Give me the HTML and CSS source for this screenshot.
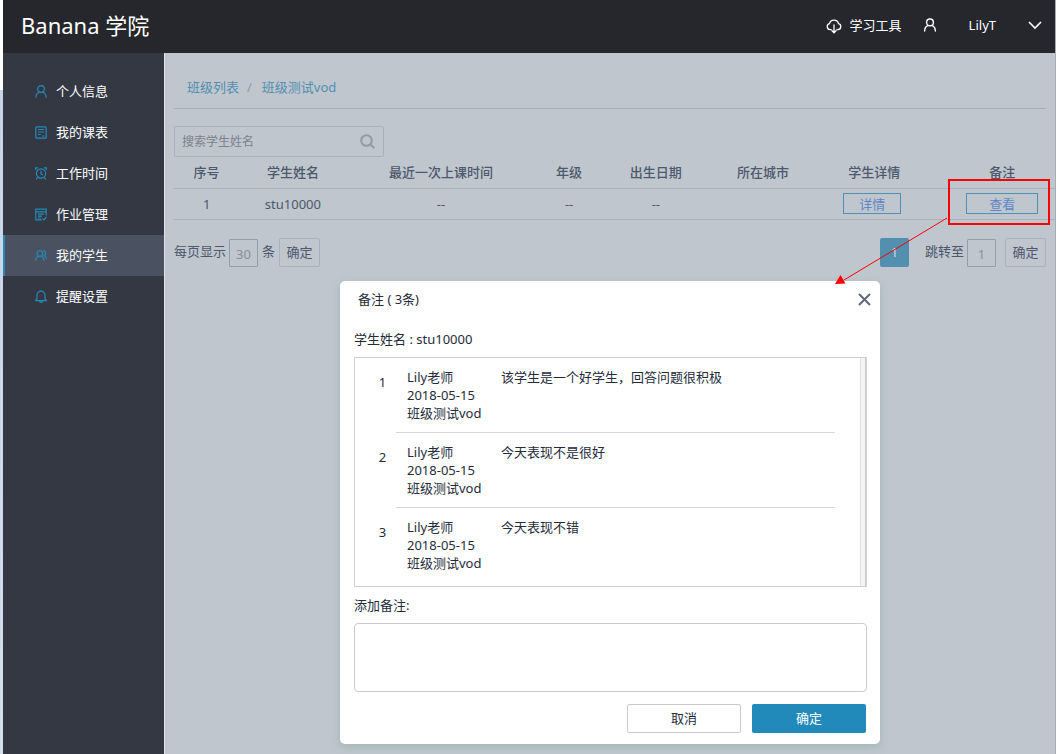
FILE: index.html
```html
<!DOCTYPE html>
<html lang="zh-CN">
<head>
<meta charset="utf-8">
<meta name="viewport" content="width=device-width, initial-scale=1">
<title>Banana 学院</title>
<link rel="stylesheet" href="styles.css">
</head>
<body>
<div class="app">
  <header class="topbar">
    <h1 class="brand">Banana 学院</h1>
    <nav class="topnav">
      <a class="tools" href="#">
        <svg width="16" height="16" viewBox="0 0 16 16" fill="none" stroke="currentColor" stroke-width="1.3" stroke-linecap="round" stroke-linejoin="round"><path d="M5.2 11.6H4a3 3 0 0 1-.5-5.9 4.6 4.6 0 0 1 9 0A3 3 0 0 1 12 11.6h-1.2M8 7v7.6M6 12.8l2 2 2-2"/></svg>
        <span>学习工具</span>
      </a>
      <svg class="user-icon" width="14" height="14" viewBox="0 0 14 14" fill="none" stroke="currentColor" stroke-width="1.4" stroke-linecap="round"><circle cx="7" cy="4.4" r="3.4"/><path d="M1.600 13c.1-3 1.500-4.900 3.600-5.600M12.400 13c-.1-3-1.500-4.900-3.600-5.600"/></svg>
      <button class="account" type="button">
        <span>LilyT</span>
        <svg width="14" height="9" viewBox="0 0 14 9" fill="none" stroke="currentColor" stroke-width="1.6"><path d="M1 1l6 6 6-6"/></svg>
      </button>
    </nav>
  </header>
  <div class="body">
    <nav class="sidebar">
      <a class="item" href="#"><svg class="icon" viewBox="0 0 12 13"><circle cx="6" cy="4" r="3.300"/><path d="M.8 12.700c0-2.700 1.300-4.700 3.500-5.500M11.200 12.700c0-2.700-1.300-4.700-3.500-5.500"/></svg>个人信息</a>
      <a class="item" href="#"><svg class="icon" viewBox="0 0 12 13"><rect x=".8" y=".8" width="10.400" height="11.400" rx="1"/><path d="M3 3.500h6M3 6h6M3 8.500h3M7 10h2.500"/></svg>我的课表</a>
      <a class="item" href="#"><svg class="icon" viewBox="0 0 12 13"><circle cx="6" cy="6.500" r="4.600"/><path d="M6 3.800v2.900l1.800 1.200M.7 3V.9h2.400M8.900.9h2.400V3M2.500 10.600L1.200 12.300M9.500 10.600l1.300 1.700"/></svg>工作时间</a>
      <a class="item" href="#"><svg class="icon" viewBox="0 0 12 13"><path d="M11.200 7.500V1.200H.8v10.600h6M.8 3.800h10.400M3 6.200h6M3 8.200h4M3 10h3M7.500 10.300l1.500 1.500 2.500-3"/></svg>作业管理</a>
      <a class="item active" href="#" aria-current="page"><svg class="icon" viewBox="0 0 12 13"><circle cx="4.800" cy="4.500" r="2.900"/><path d="M.6 11.800c0-2.300 1-3.800 2.600-4.500M9 11.800c0-2.300-1-3.800-2.600-4.500M8.300 1.700a2.700 2.700 0 0 1 .9 5.100c1.400.5 2.200 1.700 2.300 3.500"/></svg>我的学生</a>
      <a class="item" href="#"><svg class="icon" viewBox="0 0 12 13"><path d="M.6 10.600h10.800L10 8.700V5.200a4 4 0 0 0-8 0v3.500zM6 .2v1M4.600 11a1.400 1.400 0 0 0 2.800 0"/></svg>提醒设置</a>
    </nav>
    <main class="main">
      <nav class="crumbs"><a href="#">班级列表</a><span class="sep">/</span><a href="#">班级测试vod</a></nav>
      <form class="search">
        <input type="search" placeholder="搜索学生姓名" aria-label="搜索学生姓名">
        <button type="button" aria-label="搜索"><svg width="15" height="15" viewBox="0 0 15 15" fill="none" stroke="currentColor" stroke-width="2"><circle cx="6.500" cy="6.500" r="5.300"/><path d="M10.500 10.500l3.800 3.500"/></svg></button>
      </form>
      <table class="students">
        <colgroup><col class="c-no"><col class="c-name"><col class="c-last"><col class="c-grade"><col class="c-birth"><col class="c-city"><col class="c-detail"><col></colgroup>
        <thead><tr><th>序号</th><th>学生姓名</th><th>最近一次上课时间</th><th>年级</th><th>出生日期</th><th>所在城市</th><th>学生详情</th><th class="notes">备注</th></tr></thead>
        <tbody><tr><td>1</td><td>stu10000</td><td>--</td><td>--</td><td>--</td><td></td>
          <td class="detail"><button class="link-btn" type="button">详情</button></td>
          <td class="notes">
            <div class="callout">
              <button class="link-btn wide" type="button">查看</button>
              <span class="frame"></span>
              <svg class="arrow" width="114" height="70" viewBox="0 0 114 70"><path d="M112 1L9 63" stroke="#f00" stroke-width="1" fill="none"/><path d="M0 67l5.500-9 5 8.500z" fill="#f00"/></svg>
            </div>
          </td></tr></tbody>
      </table>
      <div class="pager">
        <div class="group">
          <label for="size">每页显示</label><input id="size" class="box" type="text" value="30"><span class="unit">条</span><button class="ok" type="button">确定</button>
        </div>
        <div class="group">
          <button class="page" type="button">1</button><label class="jump" for="jump">跳转至</label><input id="jump" class="box" type="text" value="1"><button class="ok last" type="button">确定</button>
        </div>
      </div>
      <div class="overlay">
        <section class="modal" role="dialog" aria-labelledby="dlg-title">
          <header class="modal-head">
            <h2 id="dlg-title">备注 ( 3条)</h2>
            <button class="close" type="button" aria-label="关闭"><svg width="13" height="13" viewBox="0 0 13 13" stroke="currentColor" stroke-width="2"><path d="M1 1l11 11M12 1L1 12"/></svg></button>
          </header>
          <p class="student">学生姓名 : stu10000</p>
          <div class="list">
            <ol>
              <li><span class="num">1</span><div class="note"><div class="meta">Lily老师<br>2018-05-15<br>班级测试vod</div><p>该学生是一个好学生，回答问题很积极</p></div></li>
              <li><span class="num">2</span><div class="note"><div class="meta">Lily老师<br>2018-05-15<br>班级测试vod</div><p>今天表现不是很好</p></div></li>
              <li><span class="num">3</span><div class="note"><div class="meta">Lily老师<br>2018-05-15<br>班级测试vod</div><p>今天表现不错</p></div></li>
            </ol>
            <div class="track"></div>
          </div>
          <label class="add" for="note">添加备注:</label>
          <textarea id="note"></textarea>
          <footer class="actions"><button class="cancel" type="button">取消</button><button class="confirm" type="button">确定</button></footer>
        </section>
      </div>
    </main>
  </div>
</div>
</body>
</html>
```
FILE: styles.css
```css
* { box-sizing: border-box; }
body {
  margin: 0;
  padding: 0 1px 0 3px;
  background: linear-gradient(#fff, #fff) right / 1px 100% no-repeat, linear-gradient(#fff 90px, #c9d3e6 90px, #d3dfed);
  font: 13px/18px "Noto Sans", "Noto Sans CJK SC", sans-serif;
  color: #252b3a;
}
button, input, textarea { font: inherit; color: inherit; margin: 0; }
button { padding: 0; border: 0; background: none; cursor: pointer; }
a { text-decoration: none; }
svg { flex: none; display: block; }
h1, h2, p, ol { margin: 0; padding: 0; font-weight: 400; }
.app { min-height: 100vh; display: flex; flex-direction: column; }

.topbar {
  height: 53px;
  padding: 0 13px 3px 18px;
  display: flex;
  align-items: center;
  justify-content: space-between;
  background: #26272c;
  border-right: 1px solid #a9adb3;
  color: #fff;
}
.brand { font-size: 22px; line-height: 30px; }
.topnav { display: flex; align-items: center; }
.tools { display: flex; align-items: center; gap: 8px; color: #fff; }
.tools svg { margin-top: 2px; }
.user-icon { margin: 0 32px 0 21px; }
.account { display: flex; align-items: center; gap: 32px; }

.body { flex: 1; display: flex; }
.sidebar { width: 162px; flex: none; padding-top: 18px; background: #343843; border-right: 1px solid #dfe2e6; }
.item { display: flex; align-items: center; gap: 9px; height: 41px; padding: 0 0 2px 30px; border-left: 2px solid transparent; color: #fff; }
.item.active { background: #4a5161; border-left-color: #228abb; }
.icon { width: 12px; height: 13px; margin-top: 2px; fill: none; stroke: #258ab9; stroke-width: 1.2; }

.main { position: relative; flex: 1; min-width: 0; padding-left: 9px; background: #bfc6ce; border-right: 1px solid #a9adb3; color: #4c586b; }
.crumbs { display: flex; margin-right: 9px; padding: 25px 13px 12px; border-bottom: 1px solid #a5adb6; }
.crumbs a { color: #538fae; }
.sep { margin: 0 10px 0 8px; color: #929ba7; }
.search { display: flex; width: 210px; height: 31px; margin-top: 17px; border: 1px solid #a9b2bf; border-radius: 2px; }
.search input { flex: 1; min-width: 0; padding: 0 7px; border: 0; outline: 0; background: none; font-size: 12px; }
.search input::placeholder { color: #7c838d; }
.search button { width: 31px; display: grid; place-items: center; color: #929ba7; }

.students { width: 100%; table-layout: fixed; border-collapse: collapse; text-align: center; }
.students th, .students td { height: 31px; padding: 0; border-bottom: 1px solid #abb2bc; }
.students th { font-weight: 500; }
.c-no { width: 7.4%; }
.c-name { width: 12.2%; }
.c-last { width: 21.4%; }
.c-grade { width: 7.7%; }
.c-birth { width: 12%; }
.c-city { width: 12.3%; }
.c-detail { width: 13%; }
.students .notes { padding-left: 18px; }
.students .detail { padding-right: 4px; }
.callout { position: relative; display: inline-block; vertical-align: middle; }
.link-btn { display: block; width: 58px; height: 21px; margin: 0 auto; border: 1px solid #538fae; color: #5d88c6; line-height: 18px; }
.link-btn.wide { width: 72px; }
.frame { position: absolute; inset: -14px -12px -11px -18px; border: 2px solid #f00; pointer-events: none; }
.arrow { position: absolute; right: 89px; top: 24px; z-index: 3; pointer-events: none; }

.pager { display: flex; justify-content: space-between; margin: 18px 9px 0 0; }
.group { display: flex; align-items: flex-end; height: 29px; }
.group label, .unit { align-self: flex-start; line-height: 26px; }
.box { width: 29px; height: 28px; padding: 2px 0 0; border: 1px solid #939dac; border-radius: 1px; background: none; text-align: center; color: #858f9d; }
.group label + .box { margin-left: 3px; }
.unit { margin: 0 4px; }
.ok { width: 41px; height: 29px; border: 1px solid #a9b2bf; border-radius: 2px; line-height: 26px; }
.ok.last { margin-left: 9px; }
.page { width: 29px; height: 29px; border-radius: 2px; background: #538fae; color: #d0dde5; }
.jump { margin-left: 16px; }

.overlay { position: absolute; inset: 0; z-index: 2; display: flex; justify-content: center; align-items: flex-start; padding: 228px 10px 10px; pointer-events: none; }
.modal { pointer-events: auto; width: 540px; padding: 9px 13px 11px 14px; display: flex; flex-direction: column; border-radius: 5px; background: #fff; box-shadow: 0 3px 8px rgba(120, 160, 150, .4); color: #252b3a; }
.modal-head { display: flex; align-items: center; justify-content: space-between; padding-left: 4px; }
.modal-head h2 { font-size: 13px; line-height: 18px; }
.close { width: 13px; height: 13px; margin-right: -4px; color: #5f6977; }
.student { margin: 22px 0 9px; }
.list { display: flex; border: 1px solid #d0d1d2; }
.list ol { flex: 1; list-style: none; padding-bottom: 4px; }
.list li { display: flex; }
.num { width: 41px; padding: 15px 0 0 14px; text-align: center; }
.note { flex: 1; display: flex; margin-right: 25px; padding: 10px 10px 10px 11px; border-bottom: 1px solid #d5d6d8; }
li:last-child .note { border: 0; }
.meta { width: 94px; }
.track { width: 6px; background: #f3f3f3; border-left: 1px solid #e0e0e0; border-right: 1px solid #d0d0d0; }
.add { margin: 9px 0; }
textarea { width: 100%; height: 69px; padding: 6px; border: 1px solid #c9cacb; border-radius: 4px; background: #fff; resize: none; }
.actions { display: flex; justify-content: flex-end; gap: 11px; margin-top: 12px; padding-right: 1px; }
.actions button { width: 114px; height: 29px; padding-bottom: 2px; border-radius: 2px; }
.actions .cancel { border: 1px solid #c9cacb; }
.actions .confirm { background: #228abb; color: #fff; }
```
